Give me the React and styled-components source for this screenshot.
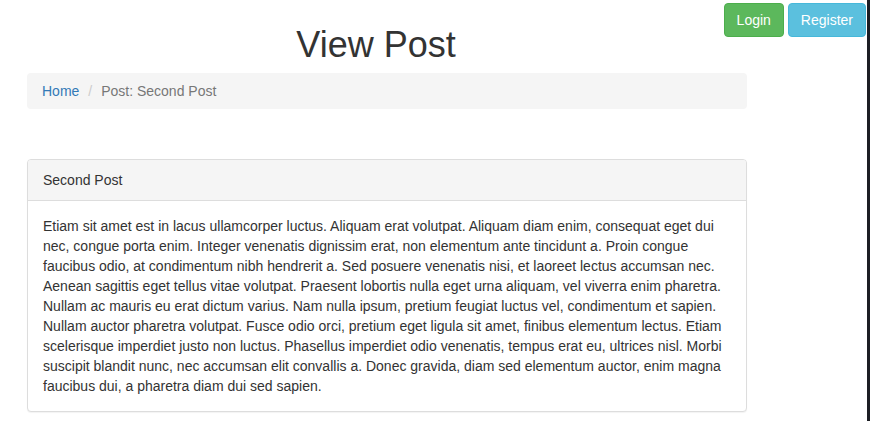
import React from 'react';
import styled, { createGlobalStyle } from 'styled-components';

const GlobalStyle = createGlobalStyle`
  html, body {
    margin: 0;
    padding: 0;
    background: #fff;
  }

  body {
    font-family: "Liberation Sans", Arial, sans-serif;
    font-size: 14px;
    line-height: 20px;
    color: #333;
  }

  * {
    box-sizing: border-box;
  }
`;

const Page = styled.div`
  display: flex;
  min-height: 100vh;
`;

const Main = styled.main`
  position: relative;
  flex: 1;
`;

const EdgeStrip = styled.div`
  width: 3px;
  background: #1c1e24;
`;

const AuthNav = styled.nav`
  position: absolute;
  top: 3px;
  right: 1px;
  display: flex;
  gap: 4px;
`;

const Button = styled.a`
  display: inline-block;
  padding: 6px 12px;
  font-size: 14px;
  line-height: 20px;
  border: 1px solid ${({ variant }) => (variant === 'success' ? '#4cae4c' : '#46b8da')};
  border-radius: 4px;
  background: ${({ variant }) => (variant === 'success' ? '#5cb85c' : '#5bc0de')};
  color: #fff;
  text-decoration: none;
  cursor: pointer;
`;

const Container = styled.div`
  width: 750px;
  padding: 0 15px;
  margin-left: 12px;
`;

const Title = styled.h1`
  margin: 25px 0 8px;
  padding-right: 22px;
  font-size: 36px;
  font-weight: 500;
  line-height: 1.1;
  text-align: center;
  color: #333;
`;

const Breadcrumb = styled.ol`
  display: flex;
  margin: 0 0 50px;
  padding: 8px 15px;
  list-style: none;
  background: #f5f5f5;
  border-radius: 4px;

  li + li::before {
    content: '/\\00a0';
    padding: 0 5px;
    margin-left: 4px;
    color: #ccc;
  }
`;

const Crumb = styled.li`
  color: ${({ active }) => (active ? '#777' : '#337ab7')};

  a {
    color: inherit;
    text-decoration: none;
  }
`;

const Panel = styled.section`
  background: #fff;
  border: 1px solid #ddd;
  border-radius: 4px;
  box-shadow: 0 1px 1px rgba(0, 0, 0, 0.05);
`;

const PanelHeading = styled.header`
  padding: 10px 15px;
  background: #f5f5f5;
  border-bottom: 1px solid #ddd;
  border-radius: 3px 3px 0 0;
  color: #333;
`;

const PanelBody = styled.div`
  padding: 15px;

  p {
    margin: 0;
  }
`;

const postBody =
  'Etiam sit amet est in lacus ullamcorper luctus. Aliquam erat volutpat. Aliquam diam enim, consequat eget dui nec, congue porta enim. Integer venenatis dignissim erat, non elementum ante tincidunt a. Proin congue faucibus odio, at condimentum nibh hendrerit a. Sed posuere venenatis nisi, et laoreet lectus accumsan nec. Aenean sagittis eget tellus vitae volutpat. Praesent lobortis nulla eget urna aliquam, vel viverra enim pharetra. Nullam ac mauris eu erat dictum varius. Nam nulla ipsum, pretium feugiat luctus vel, condimentum et sapien. Nullam auctor pharetra volutpat. Fusce odio orci, pretium eget ligula sit amet, finibus elementum lectus. Etiam scelerisque imperdiet justo non luctus. Phasellus imperdiet odio venenatis, tempus erat eu, ultrices nisl. Morbi suscipit blandit nunc, nec accumsan elit convallis a. Donec gravida, diam sed elementum auctor, enim magna faucibus dui, a pharetra diam dui sed sapien.';

function App() {
  return (
    <>
      <GlobalStyle />
      <Page>
        <Main>
          <AuthNav>
            <Button variant='success'>Login</Button>
            <Button variant='info'>Register</Button>
          </AuthNav>

          <Container>
            <Title>View Post</Title>
            <Breadcrumb>
              <Crumb>
                <a href='#'>Home</a>
              </Crumb>
              <Crumb active>Post: Second Post</Crumb>
            </Breadcrumb>

            <Panel>
              <PanelHeading>Second Post</PanelHeading>
              <PanelBody>
                <p>{postBody}</p>
              </PanelBody>
            </Panel>
          </Container>
        </Main>
        <EdgeStrip />
      </Page>
    </>
  );
}

export default App;
